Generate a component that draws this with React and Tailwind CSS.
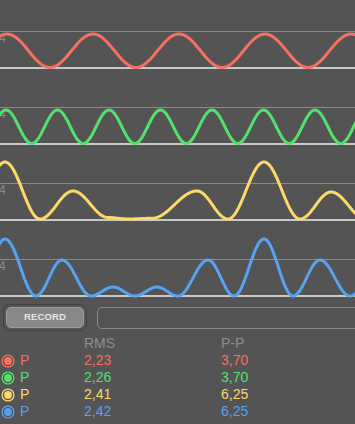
import React from "react";

function cosPath(pts, x0 = -4, x1 = 360) {
  let d = "";
  let i = 0;
  for (let x = x0; x <= x1; x += 1) {
    while (i < pts.length - 2 && pts[i + 1][0] < x) i++;
    const [ax, ay] = pts[i];
    const [bx, by] = pts[i + 1];
    const t = Math.min(1, Math.max(0, (x - ax) / (bx - ax)));
    const y = ay + ((by - ay) * (1 - Math.cos(Math.PI * t))) / 2;
    d += (x === x0 ? "M" : "L") + x + " " + y.toFixed(2) + " ";
  }
  return d;
}

function sinePath(period, peakX, top = 34, bottom = 67.5) {
  const mid = (top + bottom) / 2;
  const amp = (bottom - top) / 2;
  let d = "";
  for (let x = -4; x <= 360; x += 1) {
    const y = mid - amp * Math.cos((2 * Math.PI * (x - peakX)) / period);
    d += (x === -4 ? "M" : "L") + x + " " + y.toFixed(2) + " ";
  }
  return d;
}

const RED = "#f8705f";
const GREEN = "#52e26c";
const YELLOW = "#ffd86a";
const BLUE = "#56a3f2";

const yellowPts = [
  [-30, 67],
  [5, 10],
  [40, 67],
  [73, 39],
  [108, 65.5],
  [128, 67],
  [152, 66.3],
  [197, 39],
  [228, 67],
  [264, 10],
  [300, 67],
  [331, 40],
  [366, 67],
  [400, 30],
];

const bluePts = [
  [-24, 68],
  [5, 11],
  [36, 68],
  [62, 32],
  [91, 68],
  [113, 59],
  [135, 68],
  [157, 59],
  [178, 68],
  [208, 32],
  [234, 68],
  [264, 11],
  [293, 68],
  [320, 32],
  [350, 68],
  [378, 40],
];

const charts = [
  { color: RED, d: sinePath(86, 7) },
  { color: GREEN, d: sinePath(51.5, 6) },
  { color: YELLOW, d: cosPath(yellowPts) },
  { color: BLUE, d: cosPath(bluePts) },
];

function Chart({ color, d }) {
  return (
    <div className="relative h-[76px] w-full">
      <span className="absolute left-[-1px] top-[32px] text-[12px] leading-[12px] text-[#8a8a8a]">
        4
      </span>
      <svg width="355" height="76" className="absolute left-0 top-0 block">
        <rect x="0" y="31" width="355" height="1" fill="#8b8b8b" />
        <rect x="0" y="67" width="355" height="2" fill="#c8c8c8" />
        <path
          d={d}
          fill="none"
          stroke={color}
          strokeWidth="3"
          strokeLinejoin="round"
          strokeLinecap="round"
        />
      </svg>
    </div>
  );
}

function Radio({ color }) {
  return (
    <svg width="14" height="14" viewBox="0 0 14 14" className="block">
      <circle cx="7" cy="7" r="5.9" fill="none" stroke={color} strokeWidth="1.3" />
      <circle cx="7" cy="7" r="3.9" fill={color} />
    </svg>
  );
}

const rows = [
  { color: RED, rms: "2,23", pp: "3,70" },
  { color: GREEN, rms: "2,26", pp: "3,70" },
  { color: YELLOW, rms: "2,41", pp: "6,25" },
  { color: BLUE, rms: "2,42", pp: "6,25" },
];

export default function App() {
  return (
    <div
      className="w-[355px] h-[424px] overflow-hidden bg-[#545454] flex flex-col"
      style={{ fontFamily: '"Liberation Sans", Arial, sans-serif' }}
    >
      {charts.map((c, i) => (
        <Chart key={i} color={c.color} d={c.d} />
      ))}

      <div className="flex items-center h-[27px] pl-[3px] gap-[10px]">
        <div className="w-[84px] h-[27px] shrink-0 rounded-[7px] border border-[#434343] p-[2px]">
          <div className="h-full rounded-[5px] bg-[#888888] border border-[#9c9c9c] flex items-center justify-center text-[9.5px] font-bold text-[#e4e4e4] tracking-[0.1px]">
            RECORD
          </div>
        </div>
        <div className="w-[270px] shrink-0 h-[22px] rounded-[5px] border border-[#8a8a8a] bg-[#545454]" />
      </div>

      <div className="mt-[4px] flex flex-col text-[14px] leading-[17px]">
        <div className="flex text-[#8d8d8d]">
          <div className="w-[84px]" />
          <div className="w-[137px]">RMS</div>
          <div>P-P</div>
        </div>
        {rows.map((r, i) => (
          <div key={i} className="flex items-center h-[17px]" style={{ color: r.color }}>
            <div className="w-[20px] pl-[1px]">
              <Radio color={r.color} />
            </div>
            <div className="w-[64px]">P</div>
            <div className="w-[137px]">{r.rms}</div>
            <div>{r.pp}</div>
          </div>
        ))}
      </div>
    </div>
  );
}
